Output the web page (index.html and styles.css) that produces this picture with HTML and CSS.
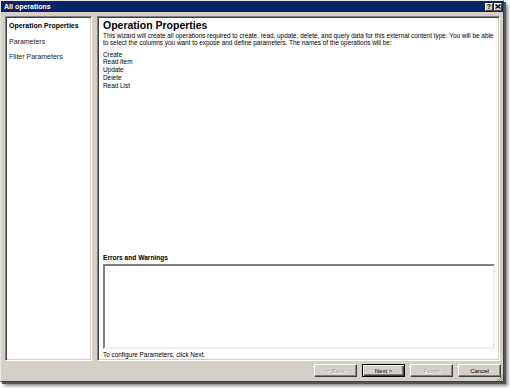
FILE: index.html
```html
<!DOCTYPE html>
<html lang="en">

<head>
    <meta charset="UTF-8">
    <title>All operations</title>

    <!-- CSS -->
    <link rel="stylesheet" href="styles.css">

</head>

<body>
    <div class="dialog">
        <div class="titlebar">
            <span class="title">All operations</span>
            <div class="caption-buttons">
                <span class="cap-btn">?</span>
                <span class="cap-btn">
                    <svg width="6" height="5" viewBox="0 0 6 5">
                        <path d="M0.5 0.5 L5.5 4.5 M5.5 0.5 L0.5 4.5" stroke="#000" stroke-width="1.2" fill="none"/>
                    </svg>
                </span>
            </div>
        </div>

        <div class="content">
            <ul class="steps">
                <li class="current">Operation Properties</li>
                <li>Parameters</li>
                <li>Filter Parameters</li>
            </ul>

            <div class="page">
                <h1>Operation Properties</h1>
                <p class="desc">This wizard will create all operations required to create, read, update, delete, and query data for this external content type. You will be able to select the columns you want to expose and define parameters. The names of the operations will be:</p>
                <ul class="ops">
                    <li>Create</li>
                    <li>Read Item</li>
                    <li>Update</li>
                    <li>Delete</li>
                    <li>Read List</li>
                </ul>
                <div class="spacer"></div>
                <h2>Errors and Warnings</h2>
                <div class="errors"></div>
                <p class="hint">To configure Parameters, click Next.</p>
            </div>
        </div>

        <div class="buttons">
            <button disabled>&lt; Back</button>
            <button class="default">Next &gt;</button>
            <button disabled>Finish</button>
            <button>Cancel</button>
        </div>

        <svg class="grip" width="7" height="7" viewBox="0 0 7 7">
            <path d="M1 7 L7 1 M3 7 L7 3 M5 7 L7 5" stroke="#808080" stroke-width="0.8" fill="none"/>
        </svg>
    </div>
</body>

</html>
```

FILE: styles.css
```css
body {
    margin: 0;
    width: 510px;
    height: 388px;
    background-color: #ffffff;
    font-family: 'Liberation Sans', Arial, sans-serif;
    overflow: hidden;
}

.dialog {
    position: relative;
    box-sizing: border-box;
    width: 504px;
    height: 382px;
    display: flex;
    flex-direction: column;
    background-color: #d4d0c8;
    border: 1px solid;
    border-color: #e8e6e0 #404040 #404040 #e8e6e0;
    box-shadow: 2px 2px 0 #555, 4px 4px 3px rgba(0, 0, 0, 0.45);
}

.titlebar {
    height: 11px;
    display: flex;
    align-items: center;
    justify-content: space-between;
    background-color: #0a246a;
    color: white;
    padding-left: 3px;
}

.title {
    font-size: 7px;
    font-weight: bold;
}

.caption-buttons {
    display: flex;
    gap: 1px;
    margin-right: 1px;
}

.cap-btn {
    box-sizing: border-box;
    width: 8px;
    height: 8px;
    display: flex;
    align-items: center;
    justify-content: center;
    background-color: #d4d0c8;
    color: #000;
    font-size: 7px;
    font-weight: bold;
    line-height: 1;
    border: 1px solid;
    border-color: #fff #404040 #404040 #fff;
}

.content {
    flex: 1;
    display: flex;
    gap: 5px;
    padding: 4px 3px 0 4px;
    min-height: 0;
}

.steps,
.page {
    box-sizing: border-box;
    background-color: white;
    border: 1px solid;
    border-color: #808080 #fff #fff #808080;
    box-shadow: inset 1px 1px #404040, inset -1px -1px #d4d0c8;
}

.steps {
    width: 87px;
    margin: 0;
    padding: 1px 3px;
    list-style: none;
    font-size: 7px;
    line-height: 15.5px;
    color: #1a1a1a;
}

.steps .current {
    font-weight: bold;
    color: #000;
}

.page {
    flex: 1;
    display: flex;
    flex-direction: column;
    padding: 2px 4px 2px 5px;
    font-size: 6.4px;
    color: #000;
}

h1 {
    margin: 0;
    font-size: 10.5px;
    line-height: 13px;
}

.desc {
    margin: 0;
    line-height: 7.3px;
}

.ops {
    margin: 4px 0 0 0;
    padding: 0;
    list-style: none;
    line-height: 7.75px;
}

.spacer {
    flex: 1;
}

h2 {
    margin: 0 0 2px 0;
    font-size: 6.6px;
    line-height: 8px;
}

.errors {
    box-sizing: border-box;
    height: 85px;
    background-color: white;
    border: 2px solid;
    border-color: #808080 #eeeeee #eeeeee #808080;
}

.hint {
    margin: 2px 0 0 0;
    line-height: 7px;
}

.buttons {
    display: flex;
    justify-content: flex-end;
    gap: 5px;
    padding: 3px 2px 4px 0;
}

button {
    box-sizing: border-box;
    width: 43px;
    height: 13px;
    padding: 0;
    background-color: #d4d0c8;
    border: 1px solid;
    border-color: #fff #404040 #404040 #fff;
    box-shadow: inset -1px -1px #808080;
    font-family: 'Liberation Sans', Arial, sans-serif;
    font-size: 6px;
    color: #000;
}

button:disabled {
    color: #a0a0a0;
    text-shadow: 1px 1px #fff;
}

button.default {
    border-color: #000;
    box-shadow: inset 1px 1px #fff, inset -1px -1px #404040, inset -2px -2px #808080;
}

.grip {
    position: absolute;
    right: 0;
    bottom: 0;
}
```
